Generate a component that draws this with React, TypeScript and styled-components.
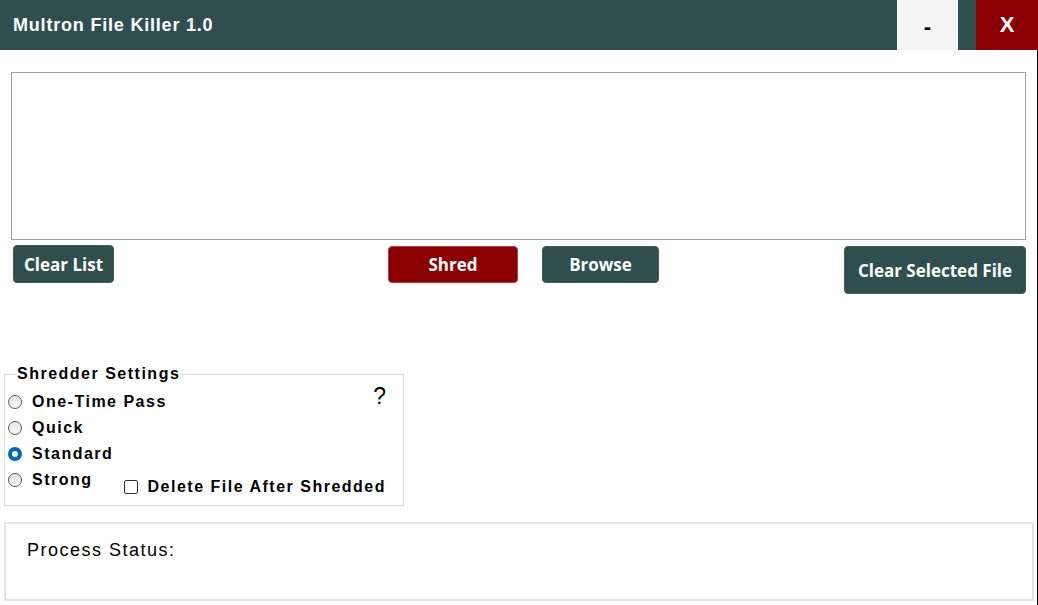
import React from 'react';
import styled, { createGlobalStyle, css } from 'styled-components';

const GlobalStyle = createGlobalStyle`
	html, body {
		margin: 0;
		padding: 0;
		background: #ffffff;
		overflow: hidden;
	}
	* {
		box-sizing: border-box;
	}
`;

const slate = '#2f4f4f';
const darkRed = '#8b0000';

const Window = styled.div`
	width: 1038px;
	height: 605px;
	background: #ffffff;
	display: flex;
	flex-direction: column;
	font-family: 'Liberation Sans', Arial, sans-serif;
`;

const TitleBar = styled.header`
	height: 50px;
	background: ${slate};
	display: flex;
	align-items: stretch;
	flex-shrink: 0;
`;

const Title = styled.h1`
	margin: 0;
	padding-left: 13px;
	flex: 1;
	display: flex;
	align-items: center;
	color: #ffffff;
	font-size: 18px;
	letter-spacing: 0.8px;
	font-weight: bold;
`;

const WindowButton = styled.div<{ $close?: boolean }>`
	display: flex;
	align-items: center;
	justify-content: center;
	${p =>
		p.$close
			? css`
					width: 62px;
					margin-left: 18px;
					background: ${darkRed};
					color: #ffffff;
					font-size: 22px;
					font-weight: bold;
			  `
			: css`
					width: 61px;
					background: #f4f4f4;
					color: #000000;
					font-size: 22px;
					padding-top: 4px;
					font-weight: bold;
			  `}
`;

const Main = styled.main`
	flex: 1;
	border-right: 1px solid #000000;
	display: flex;
	flex-direction: column;
`;

const ListBox = styled.div`
	margin: 22px 11px 0 11px;
	height: 168px;
	border: 1px solid #a0a0a0;
	background: #ffffff;
`;

const ButtonRow = styled.div`
	display: flex;
	align-items: flex-start;
	margin-top: 5px;
	padding-left: 13px;
`;

const ActionButton = styled.button<{ $red?: boolean; $w: number; $h: number; $ml?: number; $mt?: number }>`
	width: ${p => p.$w}px;
	height: ${p => p.$h}px;
	margin-left: ${p => p.$ml ?? 0}px;
	margin-top: ${p => p.$mt ?? 0}px;
	background: ${p => (p.$red ? darkRed : slate)};
	border: 1px solid ${p => (p.$red ? '#b04040' : '#3f5f5f')};
	border-radius: 4px;
	color: #ffffff;
	font-family: 'Open Sans', 'Noto Sans', sans-serif;
	font-weight: bold;
	font-size: 17px;
	padding: 0;
	display: flex;
	align-items: center;
	justify-content: center;
`;

const Group = styled.fieldset`
	margin: 71px 0 0 4px;
	width: 400px;
	padding: 6px 0 5px 3px;
	border: 1px solid #dcdcdc;
	font-size: 16px;
	font-weight: bold;
	letter-spacing: 1.5px;
`;

const Legend = styled.legend`
	margin-left: 8px;
	padding: 0 1px;
	line-height: 18px;
	color: #000000;
`;

const OptionRow = styled.div`
	display: flex;
	align-items: flex-start;
`;

const Option = styled.label`
	height: 26px;
	display: flex;
	align-items: center;
	color: #000000;
`;

const RadioDot = styled.span<{ $on?: boolean }>`
	width: 14px;
	height: 14px;
	margin-right: 10px;
	border-radius: 50%;
	flex-shrink: 0;
	${p =>
		p.$on
			? css`
					background: #ffffff;
					border: 4px solid #0067c0;
			  `
			: css`
					background: linear-gradient(#e6e6e6, #f6f6f6);
					border: 1px solid #5a5a5a;
			  `}
`;

const CheckOption = styled(Option)`
	margin-left: 31px;
	margin-top: 7px;
`;

const CheckBox = styled.span`
	width: 14px;
	height: 14px;
	margin-right: 10px;
	border: 1px solid #333333;
	border-radius: 2px;
	background: #ffffff;
	flex-shrink: 0;
`;

const Help = styled.span`
	margin-left: auto;
	margin-right: 17px;
	margin-top: -5px;
	font-size: 23px;
	font-weight: normal;
	line-height: 24px;
	letter-spacing: 0;
`;

const StatusBox = styled.section`
	margin: 16px 0 0 4px;
	width: 1030px;
	height: 79px;
	border: 2px solid #e3e3e3;
	padding: 15px 0 0 21px;
	font-size: 18px;
	letter-spacing: 1.5px;
	line-height: 22px;
	color: #000000;
`;

const radios = [
	{ label: 'One-Time Pass', on: false },
	{ label: 'Quick', on: false },
	{ label: 'Standard', on: true }
];

const App = () => {
	return (
		<>
			<GlobalStyle />
			<Window>
				<TitleBar>
					<Title>Multron File Killer 1.0</Title>
					<WindowButton>-</WindowButton>
					<WindowButton $close>X</WindowButton>
				</TitleBar>
				<Main>
					<ListBox />
					<ButtonRow>
						<ActionButton $w={101} $h={38}>
							Clear List
						</ActionButton>
						<ActionButton $red $w={130} $h={37} $ml={274} $mt={1}>
							Shred
						</ActionButton>
						<ActionButton $w={117} $h={37} $ml={24} $mt={1}>
							Browse
						</ActionButton>
						<ActionButton $w={182} $h={48} $ml={185} $mt={1}>
							Clear Selected File
						</ActionButton>
					</ButtonRow>
					<Group>
						<Legend>Shredder Settings</Legend>
						{radios.map((r, i) => (
							<OptionRow key={r.label}>
								<Option>
									<RadioDot $on={r.on} />
									{r.label}
								</Option>
								{i === 0 && <Help>?</Help>}
							</OptionRow>
						))}
						<OptionRow>
							<Option>
								<RadioDot />
								Strong
							</Option>
							<CheckOption>
								<CheckBox />
								Delete File After Shredded
							</CheckOption>
						</OptionRow>
					</Group>
					<StatusBox>Process Status:</StatusBox>
				</Main>
			</Window>
		</>
	);
};

export default App;
